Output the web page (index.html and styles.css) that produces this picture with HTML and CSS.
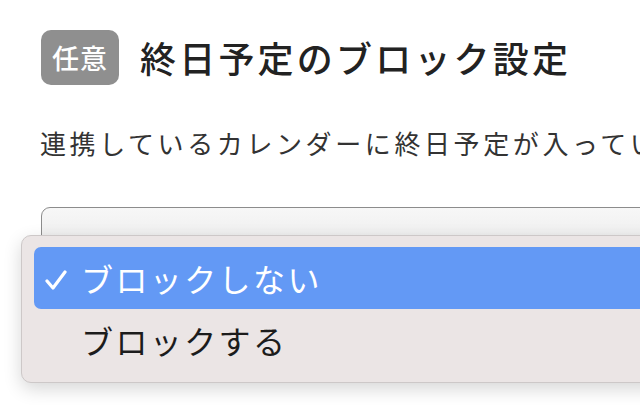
FILE: index.html
```html
<!DOCTYPE html>
<html lang="ja">
<head>
    <meta charset="UTF-8">
    <title>終日予定のブロック設定</title>
    <link rel="stylesheet" href="styles.css">
</head>
<body>
<div class="page">
    <div class="head">
        <span class="badge">任意</span>
        <h2 class="title">終日予定のブロック設定</h2>
    </div>
    <p class="desc">連携しているカレンダーに終日予定が入ってい</p>
    <div class="field">
        <div class="select"></div>
        <ul class="menu">
            <li class="select-item on">
                <svg class="check" width="22" height="20" viewBox="0 0 22 20">
                    <polyline points="2,11 8,18 20,2" fill="none" stroke="#fff" stroke-width="3.2" stroke-linecap="round" stroke-linejoin="round"/>
                </svg>
                <span>ブロックしない</span>
            </li>
            <li class="select-item"><span>ブロックする</span></li>
        </ul>
    </div>
</div>
</body>
</html>
```

FILE: styles.css
```css
* {
    margin: 0;
    padding: 0;
}

html, body {
    width: 640px;
    height: 405px;
    overflow: hidden;
    background: #fff;
}

body {
    font-family: "Noto Sans CJK JP", "Noto Sans", sans-serif;
    color: #222;
}

ul {
    list-style: none;
}

.page {
    padding: 30px 0 0 41px;
}

.head {
    display: flex;
    align-items: center;
    gap: 21px;
}

.badge {
    display: flex;
    align-items: center;
    justify-content: center;
    width: 78px;
    height: 55px;
    border-radius: 10px;
    background-color: #8f8f8f;
    color: #fff;
    font-size: 27px;
    font-weight: 500;
    letter-spacing: 1px;
}

.title {
    font-size: 36px;
    font-weight: 500;
    letter-spacing: 3.2px;
    line-height: 55px;
    color: #222;
    white-space: nowrap;
}

.desc {
    margin-top: 38px;
    margin-left: -1px;
    font-size: 26px;
    letter-spacing: 3.6px;
    line-height: 40px;
    color: #333;
    white-space: nowrap;
}

.field {
    position: relative;
    margin-top: 44px;
}

.select {
    width: 640px;
    height: 52px;
    border: 1px solid #8c8c8c;
    border-radius: 9px;
    background: linear-gradient(#f7f7f7, #e9e9e9);
}

.menu {
    position: absolute;
    left: -20px;
    top: 28px;
    width: 700px;
    padding: 11px 12px;
    border: 1px solid #cdc8c8;
    border-radius: 10px;
    background-color: #ebe5e5;
    box-shadow: 0 6px 18px rgba(0, 0, 0, 0.16);
}

.select-item {
    display: flex;
    align-items: center;
    height: 62px;
    padding-left: 47px;
    font-size: 32px;
    letter-spacing: 2.4px;
    color: #1c1c1c;
    position: relative;
}

.select-item.on {
    background-color: #6399f5;
    color: #fff;
    border-radius: 7px;
}

.check {
    position: absolute;
    left: 11px;
    top: 23px;
}
```
